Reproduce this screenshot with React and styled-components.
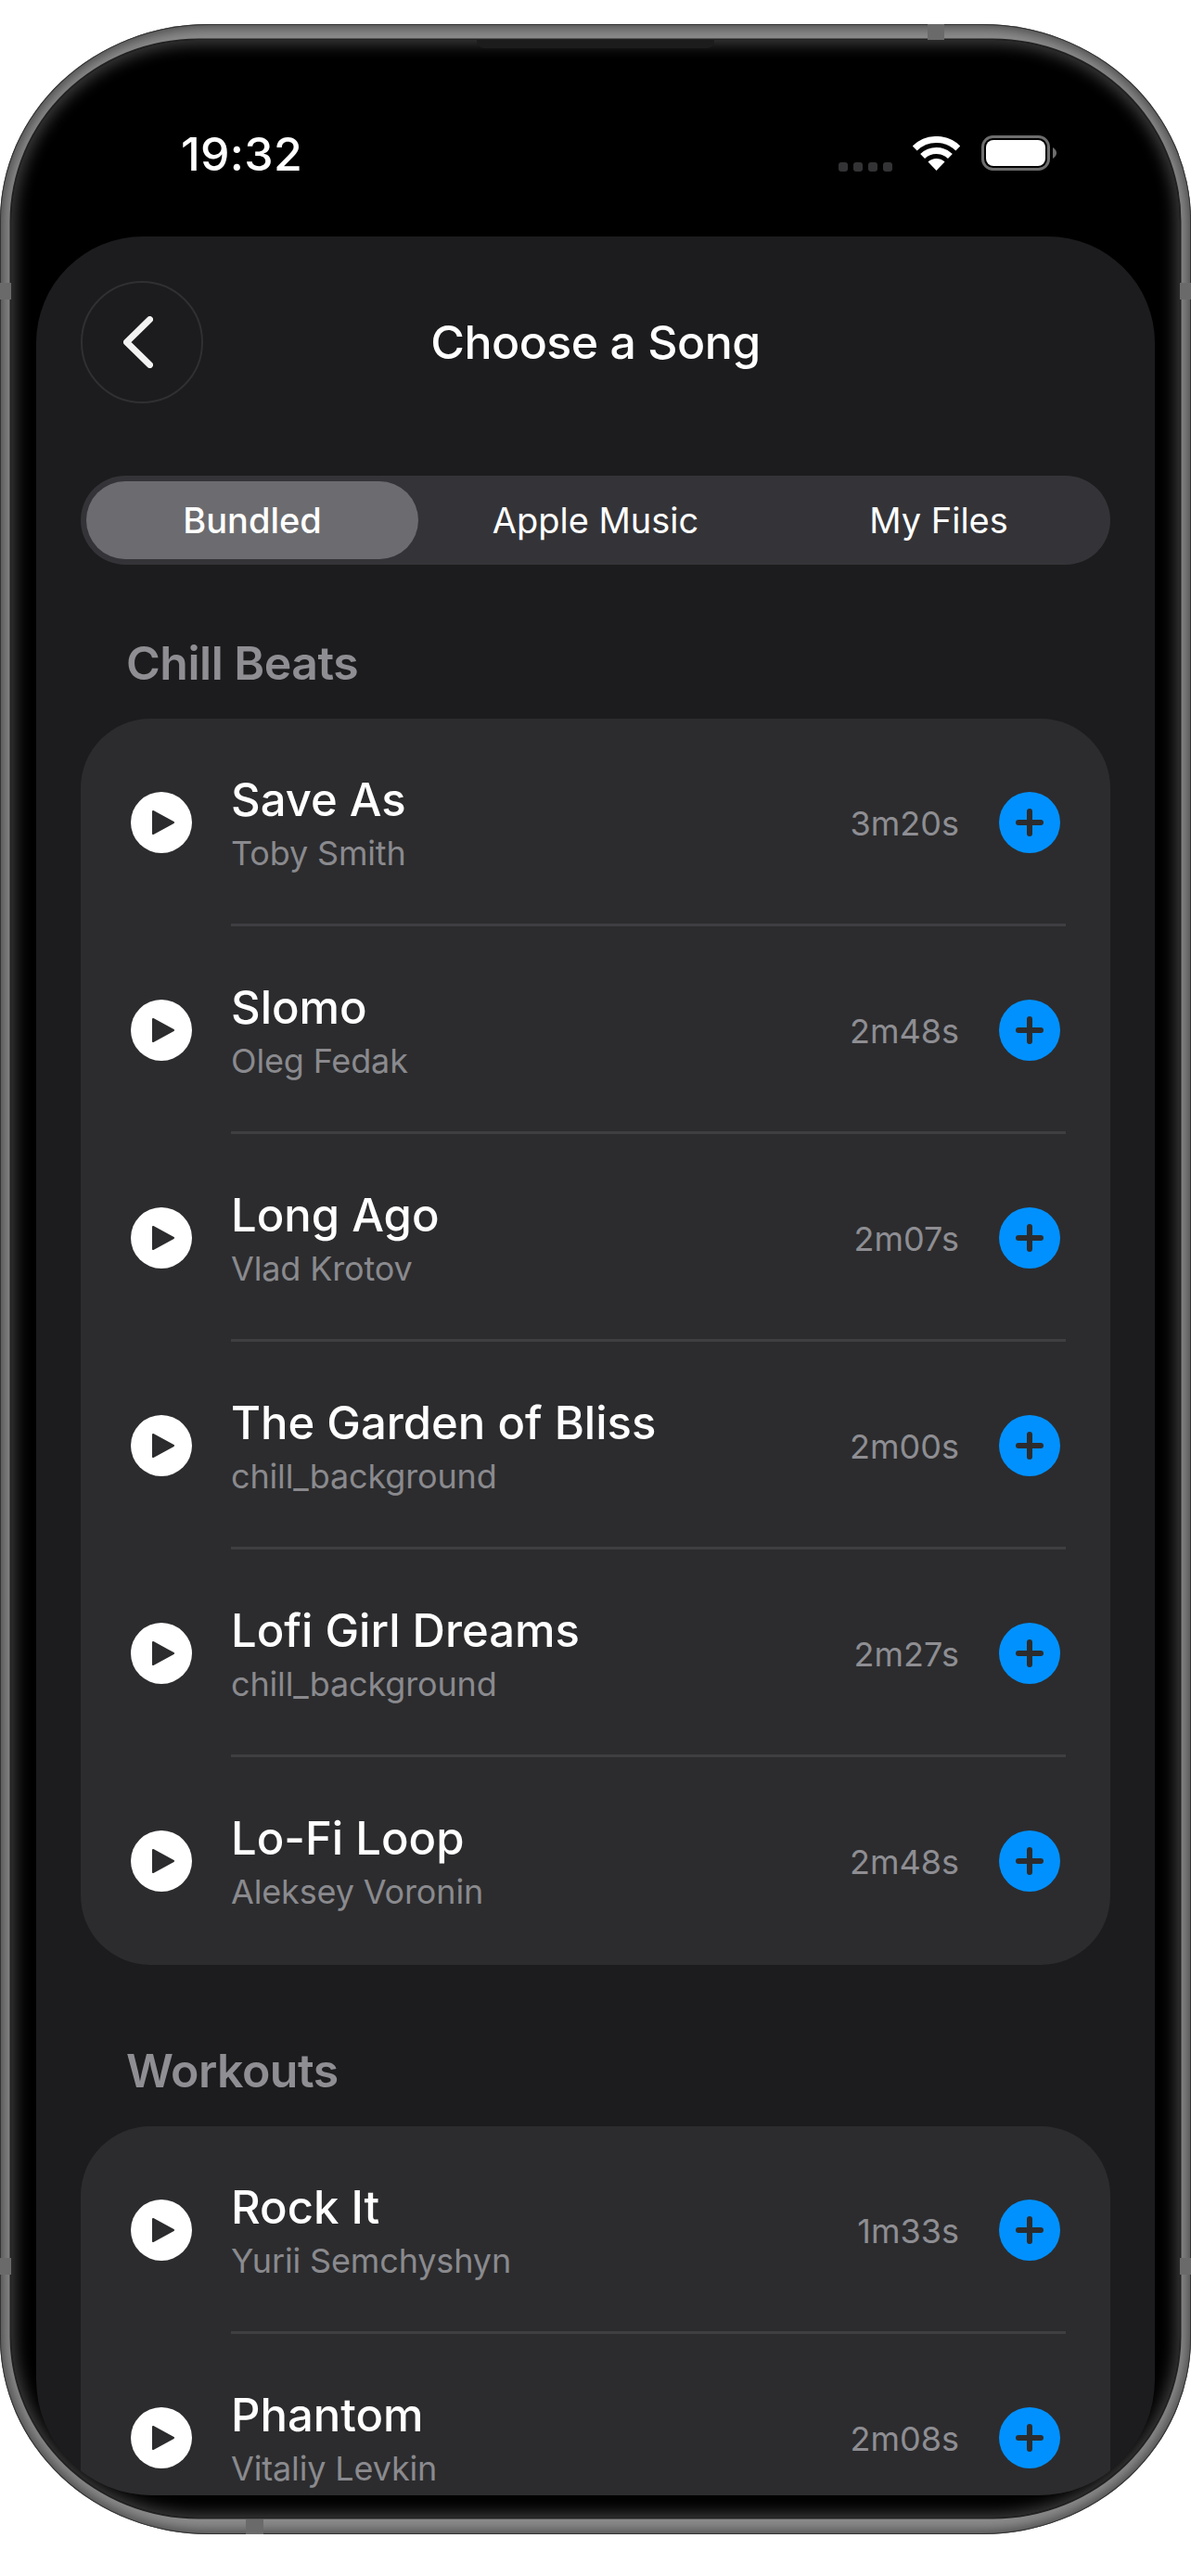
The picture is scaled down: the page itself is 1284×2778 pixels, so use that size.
import React from 'react';
import styled, { createGlobalStyle } from 'styled-components';

const GlobalStyle = createGlobalStyle`
    html, body {
        margin: 0;
        padding: 0;
        background: #fff;
    }
    * {
        box-sizing: border-box;
    }
`

const Page = styled.div`
    width: 1284px;
    height: 2778px;
    padding-top: 26px;
    overflow: hidden;
    font-family: Inter, "Liberation Sans", sans-serif;
`

const Phone = styled.div`
    position: relative;
    width: 1284px;
    height: 2707px;
    padding: 17px 12px 18px;
    border-radius: 225px / 212px;
    background: #8c8c8c;
    box-shadow:
        inset 0 0 0 1px #333,
        inset 0 0 13px 4px #484848;
`

const Band = styled.div`
    position: absolute;
    background: #6a6a6a;
    ${p => p.$top !== undefined && `top: ${p.$top}px;`}
    ${p => p.$bottom !== undefined && `bottom: ${p.$bottom}px;`}
    ${p => p.$left !== undefined && `left: ${p.$left}px;`}
    ${p => p.$right !== undefined && `right: ${p.$right}px;`}
    width: ${p => p.$w}px;
    height: ${p => p.$h}px;
`

const Speaker = styled.div`
    position: absolute;
    top: 17px;
    left: 514px;
    width: 256px;
    height: 9px;
    border-radius: 0 0 8px 8px;
    background: #1c1c1c;
    z-index: 2;
`

const Screen = styled.div`
    display: flex;
    flex-direction: column;
    height: 100%;
    padding-bottom: 24px;
    border-radius: 202px / 196px;
    background: #000;
    overflow: hidden;
    box-shadow:
        0 0 0 1.5px #222,
        inset 0 0 16px 5px #3c3c3c;
`

const StatusBar = styled.div`
    flex: none;
    display: flex;
    justify-content: space-between;
    height: 212px;
    padding: 98px 132px 0 183px;
`

const Time = styled.div`
    color: #fff;
    font-size: 50px;
    font-weight: 500;
    line-height: 50px;
    letter-spacing: 0.3px;
`

const StatusIcons = styled.div`
    display: flex;
    align-items: flex-start;
    padding-top: 6px;
`

const Signal = styled.div`
    display: flex;
    gap: 6px;
    margin: 28px 22px 0 0;
`

const SignalDot = styled.span`
    width: 10px;
    height: 10px;
    border-radius: 3px;
    background: #333335;
`

const Sheet = styled.div`
    flex: 1;
    min-height: 0;
    margin: 0 27px;
    padding: 48px 48px 0;
    border-radius: 115px 115px 125px 125px;
    background: #1c1c1e;
    overflow: hidden;
`

const Header = styled.div`
    display: grid;
    grid-template-columns: 132px 1fr 132px;
    align-items: center;
`

const BackButton = styled.button`
    display: flex;
    align-items: center;
    justify-content: center;
    width: 132px;
    height: 132px;
    margin: 0;
    padding: 0 8px 0 0;
    border: 2px solid #303032;
    border-radius: 50%;
    background: transparent;
`

const Title = styled.h1`
    margin: 0;
    color: #fff;
    font-size: 50px;
    font-weight: 500;
    line-height: 60px;
    letter-spacing: -0.5px;
    text-align: center;
`

const Tabs = styled.div`
    display: grid;
    grid-template-columns: repeat(3, 1fr);
    height: 96px;
    margin-top: 78px;
    border-radius: 48px;
    background: #343438;
`

const Tab = styled.div`
    display: flex;
    align-items: center;
    justify-content: center;
    margin: 6px;
    border-radius: 42px;
    background: ${p => (p.$active ? '#6c6c70' : 'transparent')};
    color: #fff;
    font-size: 38px;
    font-weight: ${p => (p.$active ? 500 : 400)};
`

const SectionLabel = styled.h2`
    margin: ${p => p.$top}px 0 30px;
    padding-left: 49px;
    color: #8e8e93;
    font-size: 50px;
    font-weight: 600;
    line-height: 60px;
    letter-spacing: -0.5px;
`

const Card = styled.div`
    border-radius: 75px;
    background: #2c2c2e;
`

const Row = styled.div`
    display: flex;
    align-items: center;
    height: 224px;
    padding-left: 54px;

    &:last-child > div {
        border-bottom-color: transparent;
    }
`

const PlayButton = styled.div`
    flex: none;
    display: flex;
    align-items: center;
    justify-content: center;
    width: 66px;
    height: 66px;
    border-radius: 50%;
    background: #fff;
`

const RowBody = styled.div`
    flex: 1;
    align-self: stretch;
    display: flex;
    align-items: center;
    margin: 0 48px 0 42px;
    padding: 3px 6px 0 0;
    border-bottom: 3px solid #3f3f42;
`

const SongInfo = styled.div`
    flex: 1;
    min-width: 0;
    padding-top: 2px;
`

const SongTitle = styled.div`
    color: #fff;
    font-size: 49px;
    font-weight: 450;
    line-height: 58px;
`

const SongArtist = styled.div`
    margin-top: 6px;
    color: #8a8a8e;
    font-size: 36px;
    font-weight: 400;
    line-height: 44px;
    letter-spacing: -0.15px;
`

const Duration = styled.div`
    margin-right: 43px;
    padding-top: 1px;
    color: #8e8e93;
    font-size: 36px;
    font-weight: 400;
`

const AddButton = styled.div`
    flex: none;
    display: flex;
    align-items: center;
    justify-content: center;
    width: 66px;
    height: 66px;
    border-radius: 50%;
    background: #0091ff;
`

const WifiIcon = () => (
    <svg width="51" height="37" viewBox="0 0 51 37" fill="none">
        <path d="M2.2 12.9A33.5 33.5 0 0 1 48.8 12.9" stroke="#fff" strokeWidth="7" />
        <path d="M10.6 21.5A21.5 21.5 0 0 1 40.4 21.5" stroke="#fff" strokeWidth="7" />
        <path d="M25.5 37L16.5 27.6A13 13 0 0 1 34.5 27.6Z" fill="#fff" />
    </svg>
)

const BatteryIcon = () => (
    <svg width="82" height="38" viewBox="0 0 82 38" fill="none" style={{ marginLeft: 23, marginTop: -1 }}>
        <rect x="1.5" y="1.5" width="71" height="35" rx="11" stroke="#6e6e6e" strokeWidth="3" />
        <rect x="5" y="5" width="64" height="28" rx="8" fill="#fff" />
        <path d="M77 13C80 15 81 17 81 19C81 21 80 23 77 25Z" fill="#6e6e6e" />
    </svg>
)

const BackIcon = () => (
    <svg width="32" height="56" viewBox="0 0 32 56" fill="none">
        <path d="M28.5 3.5L3.5 28L28.5 52.5" stroke="#f2f2f2" strokeWidth="7" strokeLinecap="round" strokeLinejoin="round" />
    </svg>
)

const PlayIcon = () => (
    <svg width="26" height="28" viewBox="0 0 26 28" style={{ marginLeft: 4 }}>
        <path d="M2 2L24 14L2 26Z" fill="#2c2c2e" stroke="#2c2c2e" strokeWidth="2" strokeLinejoin="round" />
    </svg>
)

const PlusIcon = () => (
    <svg width="32" height="32" viewBox="0 0 32 32" fill="none">
        <path d="M16 4V28M4 16H28" stroke="#2c2c2e" strokeWidth="6" strokeLinecap="round" />
    </svg>
)

const sections = [
    {
        name: 'Chill Beats',
        top: 76,
        songs: [
            { title: 'Save As', artist: 'Toby Smith', time: '3m20s' },
            { title: 'Slomo', artist: 'Oleg Fedak', time: '2m48s' },
            { title: 'Long Ago', artist: 'Vlad Krotov', time: '2m07s' },
            { title: 'The Garden of Bliss', artist: 'chill_background', time: '2m00s' },
            { title: 'Lofi Girl Dreams', artist: 'chill_background', time: '2m27s' },
            { title: 'Lo-Fi Loop', artist: 'Aleksey Voronin', time: '2m48s' }
        ]
    },
    {
        name: 'Workouts',
        top: 84,
        songs: [
            { title: 'Rock It', artist: 'Yurii Semchyshyn', time: '1m33s' },
            { title: 'Phantom', artist: 'Vitaliy Levkin', time: '2m08s' }
        ]
    }
]

const tabs = ['Bundled', 'Apple Music', 'My Files']

const App = () => {
    return (
        <Page>
            <GlobalStyle />
            <Phone>
                <Band $top={0} $left={1000} $w={18} $h={17} />
                <Band $top={279} $left={0} $w={12} $h={18} />
                <Band $top={279} $right={0} $w={12} $h={18} />
                <Band $bottom={280} $left={0} $w={12} $h={18} />
                <Band $bottom={280} $right={0} $w={12} $h={18} />
                <Band $bottom={0} $left={265} $w={19} $h={16} />
                <Speaker />
                <Screen>
                    <StatusBar>
                        <Time>19:32</Time>
                        <StatusIcons>
                            <Signal>
                                <SignalDot />
                                <SignalDot />
                                <SignalDot />
                                <SignalDot />
                            </Signal>
                            <WifiIcon />
                            <BatteryIcon />
                        </StatusIcons>
                    </StatusBar>
                    <Sheet>
                        <Header>
                            <BackButton>
                                <BackIcon />
                            </BackButton>
                            <Title>Choose a Song</Title>
                        </Header>
                        <Tabs>
                            {tabs.map((tab, i) => (
                                <Tab key={tab} $active={i === 0}>{tab}</Tab>
                            ))}
                        </Tabs>
                        {sections.map(section => (
                            <React.Fragment key={section.name}>
                                <SectionLabel $top={section.top}>{section.name}</SectionLabel>
                                <Card>
                                    {section.songs.map(song => (
                                        <Row key={song.title}>
                                            <PlayButton>
                                                <PlayIcon />
                                            </PlayButton>
                                            <RowBody>
                                                <SongInfo>
                                                    <SongTitle>{song.title}</SongTitle>
                                                    <SongArtist>{song.artist}</SongArtist>
                                                </SongInfo>
                                                <Duration>{song.time}</Duration>
                                                <AddButton>
                                                    <PlusIcon />
                                                </AddButton>
                                            </RowBody>
                                        </Row>
                                    ))}
                                </Card>
                            </React.Fragment>
                        ))}
                    </Sheet>
                </Screen>
            </Phone>
        </Page>
    )
}

export default App;
